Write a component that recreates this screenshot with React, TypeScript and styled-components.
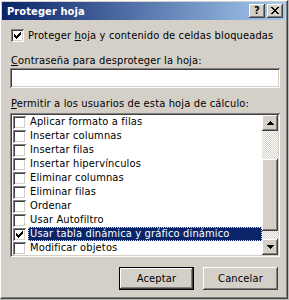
import React from 'react';
import styled, { createGlobalStyle, css } from 'styled-components';

const FACE = '#d4d0c8';
const NAVY = '#0a246a';

const Global = createGlobalStyle`
  html, body { margin: 0; padding: 0; background: #b8bcb4; }
  body {
    font-family: "DejaVu Sans Condensed", "DejaVu Sans", Tahoma, sans-serif;
    font-size: 11px;
    letter-spacing: 0.15px;
    color: #000;
  }
  * { box-sizing: border-box; }
`;

const raised = css`
  background: ${FACE};
  box-shadow: inset -1px -1px #404040, inset 1px 1px #fff, inset -2px -2px #808080, inset 2px 2px ${FACE};
`;

const sunken = css`
  box-shadow: inset 1px 1px #808080, inset -1px -1px #fff, inset 2px 2px #404040, inset -2px -2px ${FACE};
`;

const Window = styled.div`
  width: 288px;
  height: 299px;
  background: ${FACE};
  border-top: 1px solid #fff;
  border-left: 1px solid #fff;
  border-right: 1px solid #404040;
  border-bottom: 1px solid #404040;
  box-shadow: inset -1px -1px #808080;
  padding: 1px 2px 2px 1px;
  display: flex;
  flex-direction: column;
`;

const TitleBar = styled.div`
  height: 18px;
  flex: none;
  background: linear-gradient(to right, ${NAVY}, #a6caf0);
  display: flex;
  align-items: center;
  padding: 0 2px 0 5px;
`;

const Title = styled.div`
  flex: 1;
  color: #fff;
  font-weight: bold;
  font-size: 11px;
  letter-spacing: 0.1px;
`;

const CaptionButton = styled.div<{ $gap?: number }>`
  ${raised};
  width: 16px;
  height: 14px;
  margin-left: ${(p) => p.$gap ?? 0}px;
  display: flex;
  align-items: center;
  justify-content: center;
  font-weight: bold;
  font-size: 11px;
  line-height: 1;
  padding-bottom: 1px;
`;

const Body = styled.div`
  display: flex;
  flex-direction: column;
  padding: 0 0 0 9px;
`;

const MainCheckRow = styled.label`
  display: flex;
  align-items: center;
  gap: 4px;
  margin-top: 9px;
  height: 13px;
  line-height: 13px;
  white-space: nowrap;
`;

const Box = styled.span`
  width: 13px;
  height: 13px;
  flex: none;
  background: #fff;
  ${sunken};
  display: flex;
`;

const Label = styled.div<{ $top: number }>`
  margin-top: ${(p) => p.$top}px;
  height: 13px;
  line-height: 13px;
  white-space: nowrap;
`;

const U = styled.span`
  text-decoration: underline;
`;

const TextInput = styled.div`
  margin-top: 1px;
  margin-left: -1px;
  width: 270px;
  height: 20px;
  background: #fff;
  ${sunken};
`;

const List = styled.div`
  margin-top: 3px;
  margin-left: -1px;
  width: 270px;
  height: 144px;
  flex: none;
  background: #fff;
  ${sunken};
  padding: 2px;
  display: flex;
`;

const Rows = styled.div`
  flex: 1;
  display: flex;
  flex-direction: column;
  overflow: hidden;
`;

const Row = styled.div`
  height: 14px;
  flex: none;
  display: flex;
  align-items: center;
  padding-left: 1px;
  white-space: nowrap;
`;

const RowText = styled.div<{ $sel?: boolean }>`
  flex: 1;
  margin-left: 2px;
  height: 14px;
  line-height: 12px;
  padding-left: 1px;
  border: 1px ${(p) => (p.$sel ? 'dotted #f5db95' : 'solid transparent')};
  background: ${(p) => (p.$sel ? NAVY : 'transparent')};
  color: ${(p) => (p.$sel ? '#fff' : '#000')};
`;

const ScrollBar = styled.div`
  width: 16px;
  display: flex;
  flex-direction: column;
`;

const ArrowButton = styled.div`
  ${raised};
  width: 16px;
  height: 16px;
  flex: none;
  display: flex;
  align-items: center;
  justify-content: center;
`;

const Track = styled.div`
  flex: 1;
  background: repeating-conic-gradient(#fff 0 25%, ${FACE} 0 50%) 0 0 / 2px 2px;
  padding-top: 28px;
`;

const Thumb = styled.div`
  ${raised};
  width: 16px;
  height: 72px;
`;

const Footer = styled.div`
  display: flex;
  justify-content: flex-end;
  gap: 9px;
  margin-top: 10px;
  padding-right: 7px;
`;

const Button = styled.div<{ $default?: boolean }>`
  width: 75px;
  height: 23px;
  display: flex;
  align-items: center;
  justify-content: center;
  background: ${FACE};
  ${(p) =>
    p.$default
      ? css`
          box-shadow: inset 0 0 0 1px #000, inset -2px -2px #404040, inset 2px 2px #fff, inset -3px -3px #808080;
        `
      : css`
          box-shadow: inset -1px -1px #404040, inset 1px 1px #fff, inset -2px -2px #808080;
        `}
`;

const Check = () => (
  <svg width="13" height="13" viewBox="0 0 13 13" shapeRendering="crispEdges">
    <path
      fill="#000"
      d="M9 3h1v1H9z M8 4h2v1H8z M3 5h1v1H3z M7 5h3v1H7z M3 6h2v1H3z M6 6h3v1H6z M3 7h5v1H3z M4 8h3v1H4z M5 9h1v1H5z"
    />
  </svg>
);

const Arrow = ({ down }: { down?: boolean }) => (
  <svg width="7" height="4" viewBox="0 0 7 4" shapeRendering="crispEdges">
    <path
      fill="#000"
      d={down ? 'M0 0h7v1H0z M1 1h5v1H1z M2 2h3v1H2z M3 3h1v1H3z' : 'M3 0h1v1H3z M2 1h3v1H2z M1 2h5v1H1z M0 3h7v1H0z'}
    />
  </svg>
);

const CloseGlyph = () => (
  <svg width="8" height="7" viewBox="0 0 8 7" shapeRendering="crispEdges">
    <path
      fill="#000"
      d="M0 0h2v1H0z M6 0h2v1H6z M1 1h2v1H1z M5 1h2v1H5z M2 2h4v1H2z M3 3h2v1H3z M2 4h4v1H2z M1 5h2v1H1z M5 5h2v1H5z M0 6h2v1H0z M6 6h2v1H6z"
    />
  </svg>
);

const items = [
  'Aplicar formato a filas',
  'Insertar columnas',
  'Insertar filas',
  'Insertar hipervínculos',
  'Eliminar columnas',
  'Eliminar filas',
  'Ordenar',
  'Usar Autofiltro',
  'Usar tabla dinámica y gráfico dinámico',
  'Modificar objetos',
];

export default function App() {
  return (
    <>
      <Global />
      <Window>
        <TitleBar>
          <Title>Proteger hoja</Title>
          <CaptionButton>?</CaptionButton>
          <CaptionButton $gap={2}>
            <CloseGlyph />
          </CaptionButton>
        </TitleBar>
        <Body>
          <MainCheckRow>
            <Box>
              <Check />
            </Box>
            <span>
              Proteger <U>h</U>oja y contenido de celdas bloqueadas
            </span>
          </MainCheckRow>
          <Label $top={12}>
            <U>C</U>ontraseña para desproteger la hoja:
          </Label>
          <TextInput />
          <Label $top={9}>
            <U>P</U>ermitir a los usuarios de esta hoja de cálculo:
          </Label>
          <List>
            <Rows>
              {items.map((t, i) => {
                const sel = i === 8;
                return (
                  <Row key={t}>
                    <Box>{sel && <Check />}</Box>
                    <RowText $sel={sel}>{t}</RowText>
                  </Row>
                );
              })}
            </Rows>
            <ScrollBar>
              <ArrowButton>
                <Arrow />
              </ArrowButton>
              <Track>
                <Thumb />
              </Track>
              <ArrowButton>
                <Arrow down />
              </ArrowButton>
            </ScrollBar>
          </List>
          <Footer>
            <Button $default>Aceptar</Button>
            <Button>Cancelar</Button>
          </Footer>
        </Body>
      </Window>
    </>
  );
}
